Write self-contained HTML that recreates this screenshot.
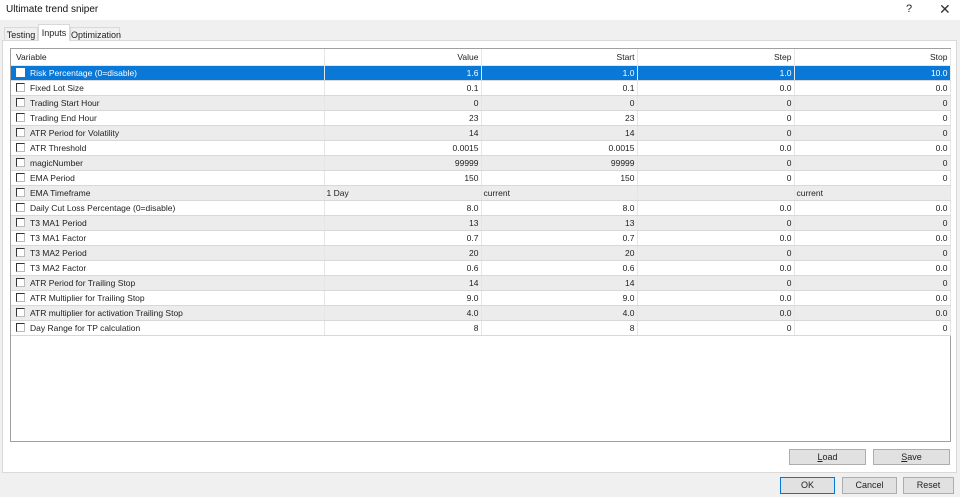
<!DOCTYPE html>
<html><head><meta charset="utf-8"><style>
*{margin:0;padding:0;box-sizing:border-box}
body{width:960px;height:497px;background:#f0f0f0;font-family:"Liberation Sans",sans-serif;font-size:8.5px;color:#222;position:relative;overflow:hidden}
.abs{position:absolute}
#title{left:0;top:0;width:960px;height:20px;background:#fff;font-size:10px;padding:4px 0 0 6px;color:#111}
.tab{position:absolute;border:1px solid #d9d9d9;border-bottom:none;background:#f0f0f0;font-size:9px;text-align:center;padding-top:2px}
#panel{left:2px;top:40px;width:955px;height:433px;background:#fff;border:1px solid #d9d9d9}
#grid{left:10px;top:48px;width:941px;height:394px;border:1px solid #a0a0a0;background:#fff}
table{border-collapse:collapse;table-layout:fixed;width:939px}
td{height:15px;border-bottom:1px solid #d8d8d8;border-right:1px solid #e6e6e6;padding:0 2px;white-space:nowrap;overflow:hidden;line-height:14px}
td.r{text-align:right}
tr.h td{height:16px;border-bottom:1px solid #e6e6e6;line-height:16px}
tr.h td:first-child{padding-left:5px}
tr.g td{background:#ececec}
tr.s td{background:#0a78d7;color:#fff}
.cb{display:inline-block;width:9px;height:9px;border:1px solid #333;border-right-color:#bbb;border-bottom-color:#bbb;background:#fff;vertical-align:-1px;margin:0 5px 0 3px}
tr.s .cb{border-color:#fff}
.btn{position:absolute;background:#e1e1e1;border:1px solid #adadad;font-size:9px;text-align:center;line-height:14px}
</style></head><body>
<div id="title" class="abs">Ultimate trend sniper</div>
<div class="abs" style="left:906px;top:3px;font-size:11px">?</div>
<div class="abs" style="left:939px;top:1px;font-size:14px;color:#333;font-weight:lighter">✕</div>
<div id="panel" class="abs"></div>
<div class="tab" style="left:4px;top:27px;width:34px;height:13px">Testing</div>
<div class="tab" style="left:38px;top:24px;width:32px;height:17px;background:#fff;border-color:#d9d9d9;padding-top:3px">Inputs</div>
<div class="tab" style="left:70px;top:27px;width:50px;height:13px">Optimization</div>
<div id="grid" class="abs"><table>
<colgroup><col style="width:313px"><col style="width:157px"><col style="width:156px"><col style="width:157px"><col style="width:156px"></colgroup>
<tr class="h"><td>Variable</td><td class="r">Value</td><td class="r">Start</td><td class="r">Step</td><td class="r">Stop</td></tr>
<tr class="s"><td><span class="cb"></span>Risk Percentage (0=disable)</td><td class="r">1.6</td><td class="r">1.0</td><td class="r">1.0</td><td class="r">10.0</td></tr>
<tr><td><span class="cb"></span>Fixed Lot Size</td><td class="r">0.1</td><td class="r">0.1</td><td class="r">0.0</td><td class="r">0.0</td></tr>
<tr class="g"><td><span class="cb"></span>Trading Start Hour</td><td class="r">0</td><td class="r">0</td><td class="r">0</td><td class="r">0</td></tr>
<tr><td><span class="cb"></span>Trading End Hour</td><td class="r">23</td><td class="r">23</td><td class="r">0</td><td class="r">0</td></tr>
<tr class="g"><td><span class="cb"></span>ATR Period for Volatility</td><td class="r">14</td><td class="r">14</td><td class="r">0</td><td class="r">0</td></tr>
<tr><td><span class="cb"></span>ATR Threshold</td><td class="r">0.0015</td><td class="r">0.0015</td><td class="r">0.0</td><td class="r">0.0</td></tr>
<tr class="g"><td><span class="cb"></span>magicNumber</td><td class="r">99999</td><td class="r">99999</td><td class="r">0</td><td class="r">0</td></tr>
<tr><td><span class="cb"></span>EMA Period</td><td class="r">150</td><td class="r">150</td><td class="r">0</td><td class="r">0</td></tr>
<tr class="g"><td><span class="cb"></span>EMA Timeframe</td><td>1 Day</td><td>current</td><td></td><td>current</td></tr>
<tr><td><span class="cb"></span>Daily Cut Loss Percentage (0=disable)</td><td class="r">8.0</td><td class="r">8.0</td><td class="r">0.0</td><td class="r">0.0</td></tr>
<tr class="g"><td><span class="cb"></span>T3 MA1 Period</td><td class="r">13</td><td class="r">13</td><td class="r">0</td><td class="r">0</td></tr>
<tr><td><span class="cb"></span>T3 MA1 Factor</td><td class="r">0.7</td><td class="r">0.7</td><td class="r">0.0</td><td class="r">0.0</td></tr>
<tr class="g"><td><span class="cb"></span>T3 MA2 Period</td><td class="r">20</td><td class="r">20</td><td class="r">0</td><td class="r">0</td></tr>
<tr><td><span class="cb"></span>T3 MA2 Factor</td><td class="r">0.6</td><td class="r">0.6</td><td class="r">0.0</td><td class="r">0.0</td></tr>
<tr class="g"><td><span class="cb"></span>ATR Period for Trailing Stop</td><td class="r">14</td><td class="r">14</td><td class="r">0</td><td class="r">0</td></tr>
<tr><td><span class="cb"></span>ATR Multiplier for Trailing Stop</td><td class="r">9.0</td><td class="r">9.0</td><td class="r">0.0</td><td class="r">0.0</td></tr>
<tr class="g"><td><span class="cb"></span>ATR multiplier for activation Trailing Stop</td><td class="r">4.0</td><td class="r">4.0</td><td class="r">0.0</td><td class="r">0.0</td></tr>
<tr><td><span class="cb"></span>Day Range for TP calculation</td><td class="r">8</td><td class="r">8</td><td class="r">0</td><td class="r">0</td></tr>
</table></div>
<div class="btn" style="left:789px;top:449px;width:77px;height:16px"><u>L</u>oad</div>
<div class="btn" style="left:873px;top:449px;width:77px;height:16px"><u>S</u>ave</div>
<div class="btn" style="left:780px;top:477px;width:55px;height:17px;border:1px solid #0078d7;line-height:15px">OK</div>
<div class="btn" style="left:842px;top:477px;width:55px;height:17px;line-height:15px">Cancel</div>
<div class="btn" style="left:903px;top:477px;width:51px;height:17px;line-height:15px">Reset</div>
</body></html>
